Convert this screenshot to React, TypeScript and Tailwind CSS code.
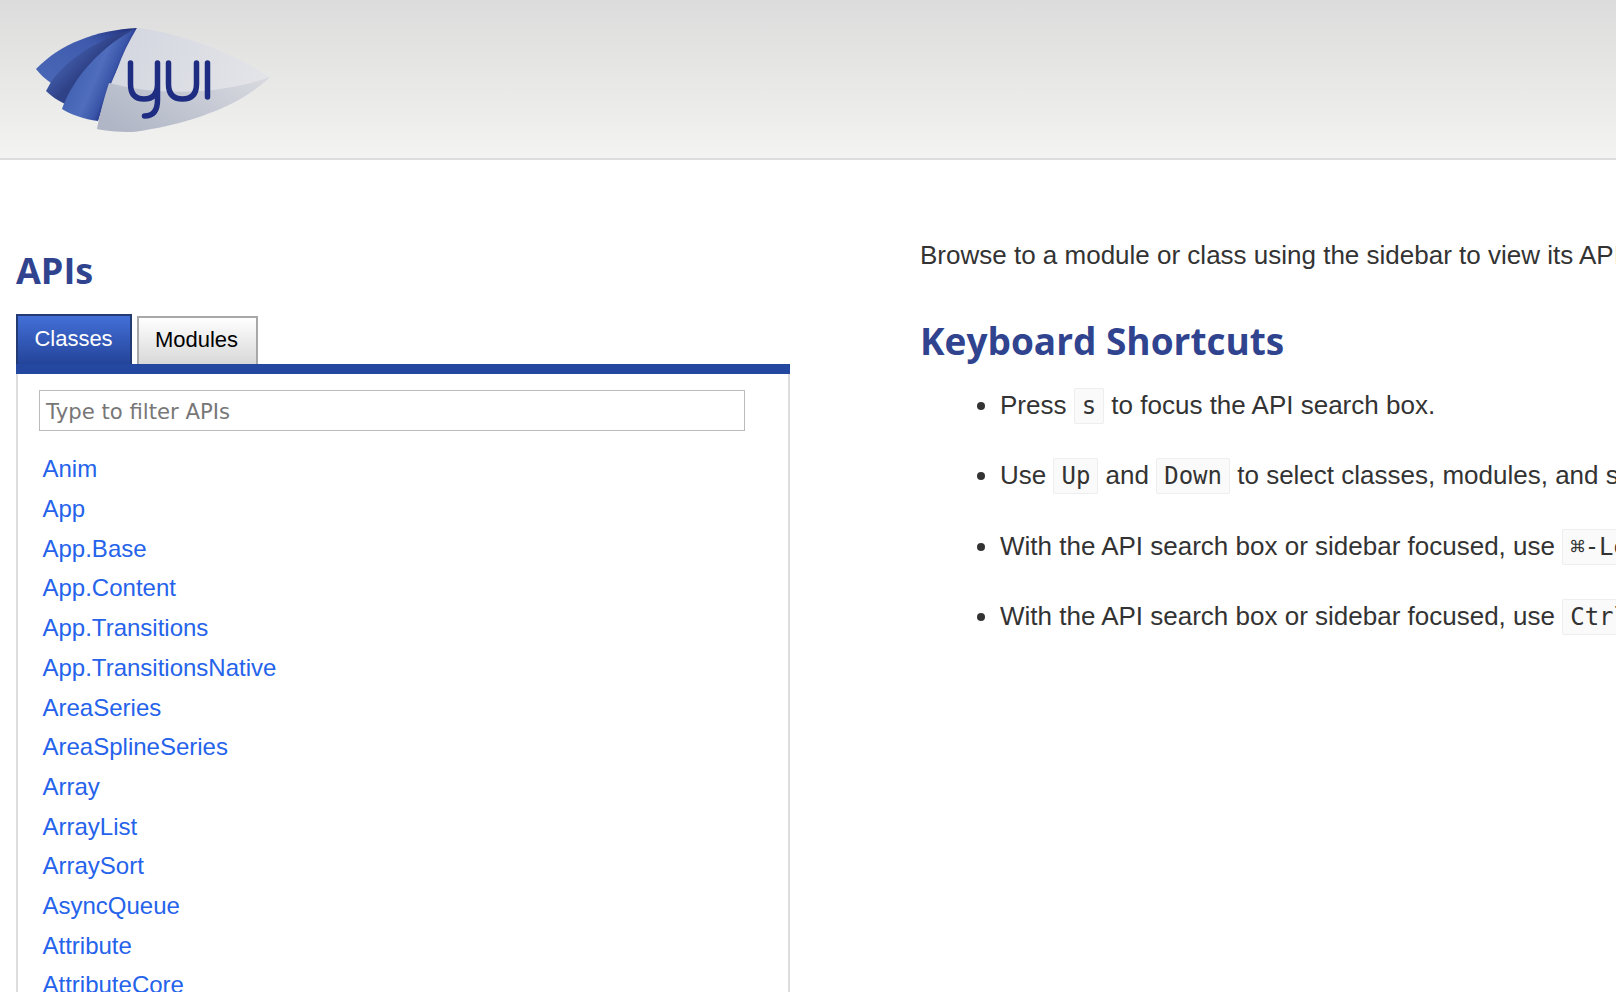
const classes = [
  "Anim",
  "App",
  "App.Base",
  "App.Content",
  "App.Transitions",
  "App.TransitionsNative",
  "AreaSeries",
  "AreaSplineSeries",
  "Array",
  "ArrayList",
  "ArraySort",
  "AsyncQueue",
  "Attribute",
  "AttributeCore",
  "AttributeEvents",
];

function Logo() {
  return (
    <svg width="320" height="158" viewBox="0 0 320 158" className="block">
      <defs>
        <linearGradient id="wing1" x1="0" y1="1" x2="1" y2="0">
          <stop offset="0" stopColor="#4a68b8" />
          <stop offset="0.65" stopColor="#3f5aac" />
          <stop offset="1" stopColor="#1f2c78" />
        </linearGradient>
        <linearGradient id="wing2" gradientUnits="userSpaceOnUse" x1="50" y1="60" x2="73" y2="82">
          <stop offset="0" stopColor="#4a68b8" />
          <stop offset="1" stopColor="#2f4288" />
        </linearGradient>
        <linearGradient id="wing3" gradientUnits="userSpaceOnUse" x1="70" y1="80" x2="112" y2="98">
          <stop offset="0" stopColor="#4262b2" />
          <stop offset="0.5" stopColor="#4f6dbc" />
          <stop offset="0.8" stopColor="#3a55a8" />
          <stop offset="1" stopColor="#1c2a84" />
        </linearGradient>
        <linearGradient id="bodyTop" x1="0" y1="0" x2="1" y2="0.3">
          <stop offset="0" stopColor="#d0d4de" />
          <stop offset="1" stopColor="#e3e4e8" />
        </linearGradient>
        <linearGradient id="bodyLow" x1="0" y1="0.7" x2="1" y2="0.2">
          <stop offset="0" stopColor="#b0b6c6" />
          <stop offset="1" stopColor="#d6d8de" />
        </linearGradient>
      </defs>
      <path d="M36 69C60 44 96 30 137 28L100 72L51 83C45 79 40 74 36 69Z" fill="url(#wing1)" />
      <path d="M46 91L51 82C68 58 100 38 137 28L104 84L65 104C57 100 51 96 46 91Z" fill="url(#wing2)" />
      <path d="M62 109C72 80 100 46 137 28L117 70L98 121C84 119 72 115 62 109Z" fill="url(#wing3)" />
      <path d="M137 28C175 32 228 50 270 77C240 106 190 124 133 132C118 132 106 131 97 129C100 112 106 94 117 70C122 55 129 41 137 28Z" fill="url(#bodyTop)" />
      <path d="M109 83C125 87 140 90 160 91C200 94 240 88 270 77C240 106 190 124 133 132C118 132 106 131 97 129C100 113 104 98 109 83Z" fill="url(#bodyLow)" />
      <g fill="none" stroke="#1e2d82" strokeWidth="5.5" strokeLinecap="round" strokeLinejoin="round">
        <path d="M130.5 63V84Q130.5 99 144 99Q157.5 99 157.5 84V63M157.5 84V100Q157.5 116 144.5 116" />
        <path d="M168.5 63V84Q168.5 99 182.5 99Q196.5 99 196.5 84V63" />
        <path d="M207.5 63V97" />
      </g>
    </svg>
  );
}

function Kbd({ children }: { children: React.ReactNode }) {
  return (
    <code className="rounded-[2px] border border-[#eeeeee] bg-[#fafafa] px-[7px] py-[3px] font-['DejaVu_Sans_Mono',monospace] text-[24px] leading-none text-[#333]">
      {children}
    </code>
  );
}

function App() {
  return (
    <div className="h-[992px] w-[1616px] overflow-hidden bg-white font-['Liberation_Sans',sans-serif] text-[#333]">
      <div className="h-[160px] border-b-2 border-[#dddddd] bg-gradient-to-b from-[#dcdcdc] to-[#f3f3f1]">
        <Logo />
      </div>
      <div className="flex">
        <div className="ml-4 w-[774px] shrink-0">
          <h2 className="mt-[89px] font-['Open_Sans',sans-serif] text-[36px] leading-[44px] font-bold text-[#30438f]">APIs</h2>
          <div className="mt-[21px] flex items-end gap-[5px]">
            <div className="flex h-[50px] w-[116px] items-center justify-center border-2 border-b-0 border-[#243a72] bg-gradient-to-b from-[#4370d8] to-[#24449a] pr-[1px] pb-1 text-[22px] text-white">
              Classes
            </div>
            <div className="flex h-[48px] w-[121px] items-center justify-center border-2 border-b-0 border-[#a8a8a8] bg-gradient-to-b from-white to-[#d8d8d8] pr-[2px] pb-[3px] text-[22px] text-black">
              Modules
            </div>
          </div>
          <div className="h-[10px] bg-[#2447a0]" />
          <div className="border-x-2 border-[#dddddd] px-[21px] pt-4">
            <div className="flex h-[41px] w-[706px] items-center border border-[#bbbbbb] px-[6px] pt-[2px] font-['DejaVu_Sans',sans-serif] text-[21.2px] text-[#777]">
              Type to filter APIs
            </div>
            <ul className="mt-[18.4px] ml-[3.5px]">
              {classes.map((name) => (
                <li key={name} className="h-[39.7px] text-[24px] leading-[39.7px] text-[#2563eb]">
                  {name}
                </li>
              ))}
            </ul>
          </div>
        </div>
        <div className="ml-[130px] w-[1100px] shrink-0">
          <p className="mt-[77px] text-[26px] leading-[36px] whitespace-nowrap">
            Browse to a module or class using the sidebar to view its API documentation.
          </p>
          <h2 className="mt-[43px] font-['Open_Sans',sans-serif] text-[37px] leading-[50px] font-bold text-[#30438f]">Keyboard Shortcuts</h2>
          <ul className="mt-[21px] ml-[60px] list-disc text-[26px] leading-[36px] whitespace-nowrap">
            <li className="mb-[34.4px] ml-5">Press <Kbd>s</Kbd> to focus the API search box.</li>
            <li className="mb-[34.4px] ml-5">Use <Kbd>Up</Kbd> and <Kbd>Down</Kbd> to select classes, modules, and sub-items in the sidebar.</li>
            <li className="mb-[34.4px] ml-5">With the API search box or sidebar focused, use <Kbd>⌘-Left</Kbd> or <Kbd>⌘-Right</Kbd> to switch sidebar tabs.</li>
            <li className="mb-[34.4px] ml-5">With the API search box or sidebar focused, use <Kbd>Ctrl+Left</Kbd> and <Kbd>Ctrl+Right</Kbd> to switch sidebar tabs.</li>
          </ul>
        </div>
      </div>
    </div>
  );
}

export default App;
